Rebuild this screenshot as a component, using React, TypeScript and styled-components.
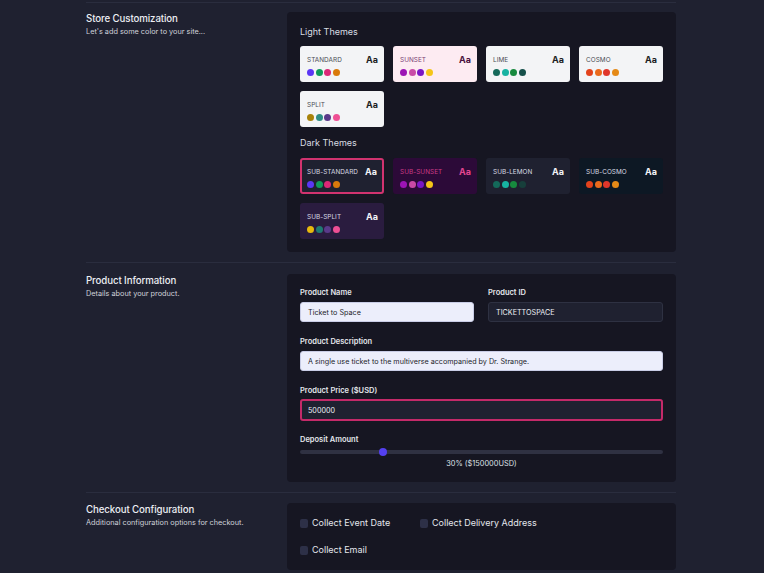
import React from "react";
import styled, { createGlobalStyle } from "styled-components";

const Global = createGlobalStyle`
  html, body { margin: 0; padding: 0; background: #1f2130; }
  body { font-family: Inter, "Noto Sans", "DejaVu Sans", sans-serif; color: #e5e7eb; -webkit-font-smoothing: antialiased; }
  * { box-sizing: border-box; }
`;

const Page = styled.div`
  width: 590px;
  margin-left: 86px;
  padding-top: 2px;
`;

const Divider = styled.div`
  height: 1px;
  background: #2a2d3e;
`;

const Section = styled.section<{ $pt: number; $pb: number }>`
  display: grid;
  grid-template-columns: 201px 389px;
  padding-top: ${(p) => p.$pt}px;
  padding-bottom: ${(p) => p.$pb}px;
`;

const Intro = styled.div`
  display: flex;
  flex-direction: column;
  gap: 1px;
`;

const Title = styled.h2`
  margin: 0;
  font-size: 9.7px;
  line-height: 14px;
  font-weight: 500;
  color: #eceef3;
  letter-spacing: -0.1px;
`;

const Subtitle = styled.p`
  margin: 0;
  font-size: 7.3px;
  line-height: 10px;
  color: #cfd2da;
`;

const Panel = styled.div<{ $pt?: number }>`
  background: #161622;
  border-radius: 4px;
  padding: 13px;
  padding-top: ${(p) => p.$pt ?? 13}px;
`;

const GroupHeading = styled.div<{ $mt?: number; $mb?: number }>`
  font-size: 9px;
  line-height: 12px;
  color: #d9dce3;
  margin-top: ${(p) => p.$mt ?? 0}px;
  margin-bottom: ${(p) => p.$mb ?? 9}px;
`;

const ThemeGrid = styled.div`
  display: grid;
  grid-template-columns: repeat(4, 84px);
  gap: 9px;
`;

const Card = styled.div<{ $bg: string; $sel?: boolean }>`
  height: 36px;
  border-radius: 3px;
  background: ${(p) => p.$bg};
  border: ${(p) => (p.$sel ? "2px solid #d1336f" : "none")};
  padding: ${(p) => (p.$sel ? "6px 5px 0 5px" : "8px 6px 0 7px")};
  display: flex;
  flex-direction: column;
  gap: 4px;
`;

const CardTop = styled.div`
  display: flex;
  justify-content: space-between;
  align-items: center;
  height: 11px;
`;

const CardName = styled.span<{ $c: string }>`
  font-size: 6.4px;
  letter-spacing: 0.05px;
  color: ${(p) => p.$c};
`;

const Aa = styled.span<{ $c: string }>`
  font-size: 9px;
  font-weight: 700;
  color: ${(p) => p.$c};
`;

const Dots = styled.div`
  display: flex;
  gap: 1.5px;
`;

const Dot = styled.span<{ $c: string }>`
  width: 7px;
  height: 7px;
  border-radius: 50%;
  background: ${(p) => p.$c};
`;

const FormGrid = styled.div`
  display: grid;
  grid-template-columns: 174px 175px;
  column-gap: 14px;
  row-gap: 15px;
`;

const Field = styled.div<{ $full?: boolean; $gap?: number; $mt?: number }>`
  display: flex;
  flex-direction: column;
  gap: ${(p) => p.$gap ?? 4}px;
  margin-top: ${(p) => p.$mt ?? 0}px;
  grid-column: ${(p) => (p.$full ? "1 / -1" : "auto")};
`;

const Label = styled.label`
  font-size: 7.5px;
  line-height: 10px;
  font-weight: 600;
  color: #e4e6ec;
`;

const Input = styled.div<{ $light?: boolean; $focus?: boolean }>`
  height: ${(p) => (p.$focus ? 22 : 20)}px;
  border-radius: 3px;
  padding: 0 ${(p) => (p.$focus ? 6 : 7)}px;
  display: flex;
  align-items: center;
  font-size: 7.2px;
  background: ${(p) => (p.$light ? "#eceefb" : "#1f2130")};
  color: ${(p) => (p.$light ? "#1c1d2a" : "#eef0f5")};
  border: ${(p) =>
    p.$focus ? "2px solid #c42a69" : p.$light ? "1px solid #c9cde6" : "1px solid #2e3142"};
`;

const Slider = styled.div`
  position: relative;
  height: 4px;
  border-radius: 2px;
  background: #2f3142;
`;

const Thumb = styled.span`
  position: absolute;
  top: -2px;
  width: 8px;
  height: 8px;
  margin-left: -4px;
  border-radius: 50%;
  background: #5440f0;
`;

const SliderValue = styled.div`
  text-align: center;
  font-size: 7.4px;
  line-height: 10px;
  color: #dfe1e8;
  margin-top: 5px;
`;

const CheckGrid = styled.div`
  display: grid;
  grid-template-columns: 120px auto;
  row-gap: 15px;
  padding: 1px 0 1px;
`;

const Check = styled.label`
  display: flex;
  align-items: center;
  gap: 4px;
  font-size: 9px;
  line-height: 12px;
  color: #e4e6ec;
`;

const Box = styled.span`
  width: 8px;
  height: 9px;
  border-radius: 2px;
  background: #2d3047;
`;

type Theme = {
  name: string;
  bg: string;
  nameColor: string;
  aa: string;
  dots: string[];
  sel?: boolean;
};

const light: Theme[] = [
  { name: "STANDARD", bg: "#f3f4f6", nameColor: "#4b4d55", aa: "#1d1e24", dots: ["#5b36f5", "#0f9a5a", "#db2877", "#d97a0b"] },
  { name: "SUNSET", bg: "#fdebf2", nameColor: "#7a3f74", aa: "#4a1140", dots: ["#9c14b4", "#c94aa6", "#7a16c4", "#f5c518"] },
  { name: "LIME", bg: "#f3f4f6", nameColor: "#4b4d55", aa: "#1d1e24", dots: ["#14695a", "#17b3a2", "#178a3e", "#15504a"] },
  { name: "COSMO", bg: "#f3f4f6", nameColor: "#4b4d55", aa: "#1d1e24", dots: ["#e3421c", "#ea6a1c", "#e0362a", "#e58a17"] },
  { name: "SPLIT", bg: "#f3f4f6", nameColor: "#4b4d55", aa: "#1d1e24", dots: ["#a7820b", "#2e8d86", "#5a3a8a", "#ef4f94"] },
];

const dark: Theme[] = [
  { name: "SUB-STANDARD", bg: "#1f2130", nameColor: "#d8dae2", aa: "#f1f2f6", dots: ["#5b36f5", "#0f9a5a", "#db2877", "#d97a0b"], sel: true },
  { name: "SUB-SUNSET", bg: "#2c0a38", nameColor: "#c93a86", aa: "#e24690", dots: ["#9c14b4", "#c94aa6", "#7a16c4", "#f5c518"] },
  { name: "SUB-LEMON", bg: "#1f2130", nameColor: "#d8dae2", aa: "#f1f2f6", dots: ["#14695a", "#17b3a2", "#178a3e", "#173f3b"] },
  { name: "SUB-COSMO", bg: "#0d1824", nameColor: "#d8dae2", aa: "#f1f2f6", dots: ["#e3421c", "#ea6a1c", "#e0362a", "#e58a17"] },
  { name: "SUB-SPLIT", bg: "#2a1c3f", nameColor: "#d8dae2", aa: "#f1f2f6", dots: ["#e8b90d", "#1e7a72", "#5a3a8a", "#ef4f94"] },
];

function ThemeCard({ t }: { t: Theme }) {
  return (
    <Card $bg={t.bg} $sel={t.sel}>
      <CardTop>
        <CardName $c={t.nameColor}>{t.name}</CardName>
        <Aa $c={t.aa}>Aa</Aa>
      </CardTop>
      <Dots>
        {t.dots.map((d, i) => (
          <Dot key={i} $c={d} />
        ))}
      </Dots>
    </Card>
  );
}

export default function App() {
  const pct = 30;
  return (
    <>
      <Global />
      <Page>
        <Divider />
        <Section $pt={9} $pb={10}>
          <Intro>
            <Title>Store Customization</Title>
            <Subtitle>Let's add some color to your site...</Subtitle>
          </Intro>
          <Panel $pt={14}>
            <GroupHeading $mb={8}>Light Themes</GroupHeading>
            <ThemeGrid>
              {light.map((t) => (
                <ThemeCard key={t.name} t={t} />
              ))}
            </ThemeGrid>
            <GroupHeading $mt={10}>Dark Themes</GroupHeading>
            <ThemeGrid>
              {dark.map((t) => (
                <ThemeCard key={t.name} t={t} />
              ))}
            </ThemeGrid>
          </Panel>
        </Section>
        <Divider />
        <Section $pt={11} $pb={10}>
          <Intro>
            <Title>Product Information</Title>
            <Subtitle>Details about your product.</Subtitle>
          </Intro>
          <Panel $pt={14}>
            <FormGrid>
              <Field>
                <Label>Product Name</Label>
                <Input $light>Ticket to Space</Input>
              </Field>
              <Field>
                <Label>Product ID</Label>
                <Input>TICKETTOSPACE</Input>
              </Field>
              <Field $full>
                <Label>Product Description</Label>
                <Input $light>A single use ticket to the multiverse accompanied by Dr. Strange.</Input>
              </Field>
              <Field $full $gap={3}>
                <Label>Product Price ($USD)</Label>
                <Input $focus>500000</Input>
              </Field>
              <Field $full $gap={5} $mt={-1}>
                <Label>Deposit Amount</Label>
                <div>
                  <Slider>
                    <Thumb style={{ left: `${(pct / 30) * 23}%` }} />
                  </Slider>
                  <SliderValue>30% ($150000USD)</SliderValue>
                </div>
              </Field>
            </FormGrid>
          </Panel>
        </Section>
        <Divider />
        <Section $pt={10} $pb={4}>
          <Intro>
            <Title>Checkout Configuration</Title>
            <Subtitle>Additional configuration options for checkout.</Subtitle>
          </Intro>
          <Panel>
            <CheckGrid>
              <Check>
                <Box />
                Collect Event Date
              </Check>
              <Check>
                <Box />
                Collect Delivery Address
              </Check>
              <Check>
                <Box />
                Collect Email
              </Check>
            </CheckGrid>
          </Panel>
        </Section>
      </Page>
    </>
  );
}
